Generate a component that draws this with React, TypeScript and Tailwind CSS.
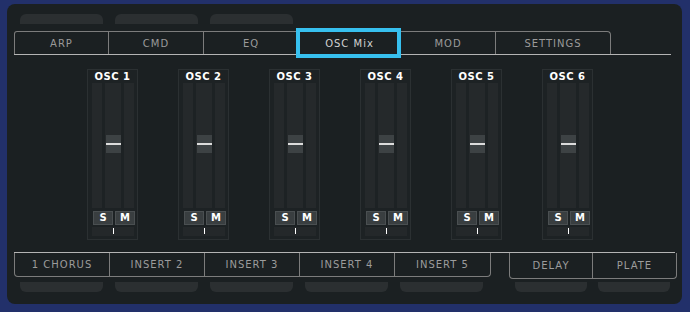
import React from "react";

const font = { fontFamily: '"DejaVu Sans", "Liberation Sans", sans-serif' };

const topTabs = ["ARP", "CMD", "EQ", "OSC Mix", "MOD", "SETTINGS"];
const inserts = ["1 CHORUS", "INSERT 2", "INSERT 3", "INSERT 4", "INSERT 5"];
const sends = ["DELAY", "PLATE"];
const channels = ["OSC 1", "OSC 2", "OSC 3", "OSC 4", "OSC 5", "OSC 6"];

function Strip({ name }: { name: string }) {
  return (
    <div className="w-[51px] h-[171px] border border-[#2b3032] bg-[#1d2224] flex flex-col">
      <div className="h-[13px] flex items-center justify-center text-[10px] tracking-[0.5px] font-bold text-white leading-none">
        {name}
      </div>
      <div className="flex h-[125px] pl-[4px] pr-[3px] gap-[3px]">
        <div className="w-[10px] bg-[#25292b]" />
        <div className="w-[16px] bg-[#25292b] flex flex-col pt-[52px]">
          <div className="ml-[1px] w-[15px] h-[18px] bg-[#3d4244] flex flex-col justify-center">
            <div className="h-[2px] bg-[#dcdcdc]" />
          </div>
        </div>
        <div className="w-[11px] bg-[#25292b]" />
      </div>
      <div className="flex gap-[2px] mt-[3px] pl-[5px]">
        {["S", "M"].map((l) => (
          <div
            key={l}
            className="w-[20px] h-[14px] bg-[#393e40] border border-[#4a4f51] flex items-center justify-center text-[10px] font-bold text-white leading-none"
          >
            {l}
          </div>
        ))}
      </div>
      <div className="mt-[2px] ml-[4px] w-[42px] h-[9px] bg-[#24282a] flex justify-center pt-[1px]">
        <div className="w-[1px] h-[6px] bg-white" />
      </div>
    </div>
  );
}

export default function App() {
  return (
    <div className="w-[690px] h-[312px] bg-[#22306a] pt-[4px] overflow-hidden" style={font}>
      <div className="ml-[7px] w-[675px] h-[300px] rounded-[8px] bg-[#1b2022] flex flex-col">
        {/* ghost tabs top */}
        <div className="mt-[10px] pl-[13px] flex gap-[12px]">
          {[0, 1, 2].map((i) => (
            <div key={i} className="w-[83px] h-[10px] rounded-t-[6px] bg-[#2b2f31]" />
          ))}
        </div>

        {/* tab bar */}
        <div className="mt-[7px] ml-[7px] w-[657px] h-[24px] border-b border-[#b4b4b4] flex">
          {topTabs.map((t, i) => {
            const w = t === "OSC Mix" ? "w-[102px]" : t === "SETTINGS" ? "w-[115px]" : "w-[95px]";
            const active = t === "OSC Mix";
            return (
              <div
                key={t}
                className={`${w} relative h-[23px] border-t border-[#7c7c7c] flex items-center justify-center text-[10px] tracking-[1px] ${
                  active ? "text-[#d2d2d2]" : "text-[#9a9a9a]"
                } ${i === 0 ? "border-l rounded-tl-[3px]" : ""} ${
                  i === topTabs.length - 1 ? "border-r rounded-tr-[4px]" : "border-r"
                }`}
              >
                {t}
                {active && (
                  <div className="absolute left-[-3px] right-[-1px] top-[-4px] bottom-[-4px] border-[4px] border-[#37c0ef]" />
                )}
              </div>
            );
          })}
        </div>

        {/* channel strips */}
        <div className="mt-[14px] pl-[80px] flex gap-[40px]">
          {channels.map((c) => (
            <Strip key={c} name={c} />
          ))}
        </div>

        {/* bottom tabs */}
        <div className="mt-[12px] ml-[7px] w-[661px] h-[26px] border-t border-[#b4b4b4] flex items-start">
          <div className="flex h-[24px] border-l border-r border-b border-[#7c7c7c] rounded-b-[4px]">
            {inserts.map((t, i) => (
              <div
                key={t}
                className={`w-[95px] h-full flex items-center justify-center text-[10px] tracking-[1px] text-[#9c9c9c] ${
                  i < inserts.length - 1 ? "border-r border-[#7c7c7c]" : ""
                }`}
              >
                {t}
              </div>
            ))}
          </div>
          <div className="ml-[18px] flex h-[26px] border-l border-r border-b border-[#7c7c7c] rounded-b-[4px]">
            {sends.map((t, i) => (
              <div
                key={t}
                className={`w-[83px] h-full flex items-center justify-center text-[10px] tracking-[1px] text-[#9c9c9c] ${
                  i === 0 ? "border-r border-[#7c7c7c]" : ""
                }`}
              >
                {t}
              </div>
            ))}
          </div>
        </div>

        {/* ghost tabs bottom */}
        <div className="mt-[4px] pl-[13px] flex">
          {[0, 1, 2, 3, 4].map((i) => (
            <div key={i} className="w-[83px] h-[10px] mr-[12px] rounded-b-[6px] bg-[#2b2f31]" />
          ))}
          <div className="ml-[20px] w-[72px] h-[10px] rounded-b-[6px] bg-[#2b2f31]" />
          <div className="ml-[11px] w-[72px] h-[10px] rounded-b-[6px] bg-[#2b2f31]" />
        </div>
      </div>
    </div>
  );
}
